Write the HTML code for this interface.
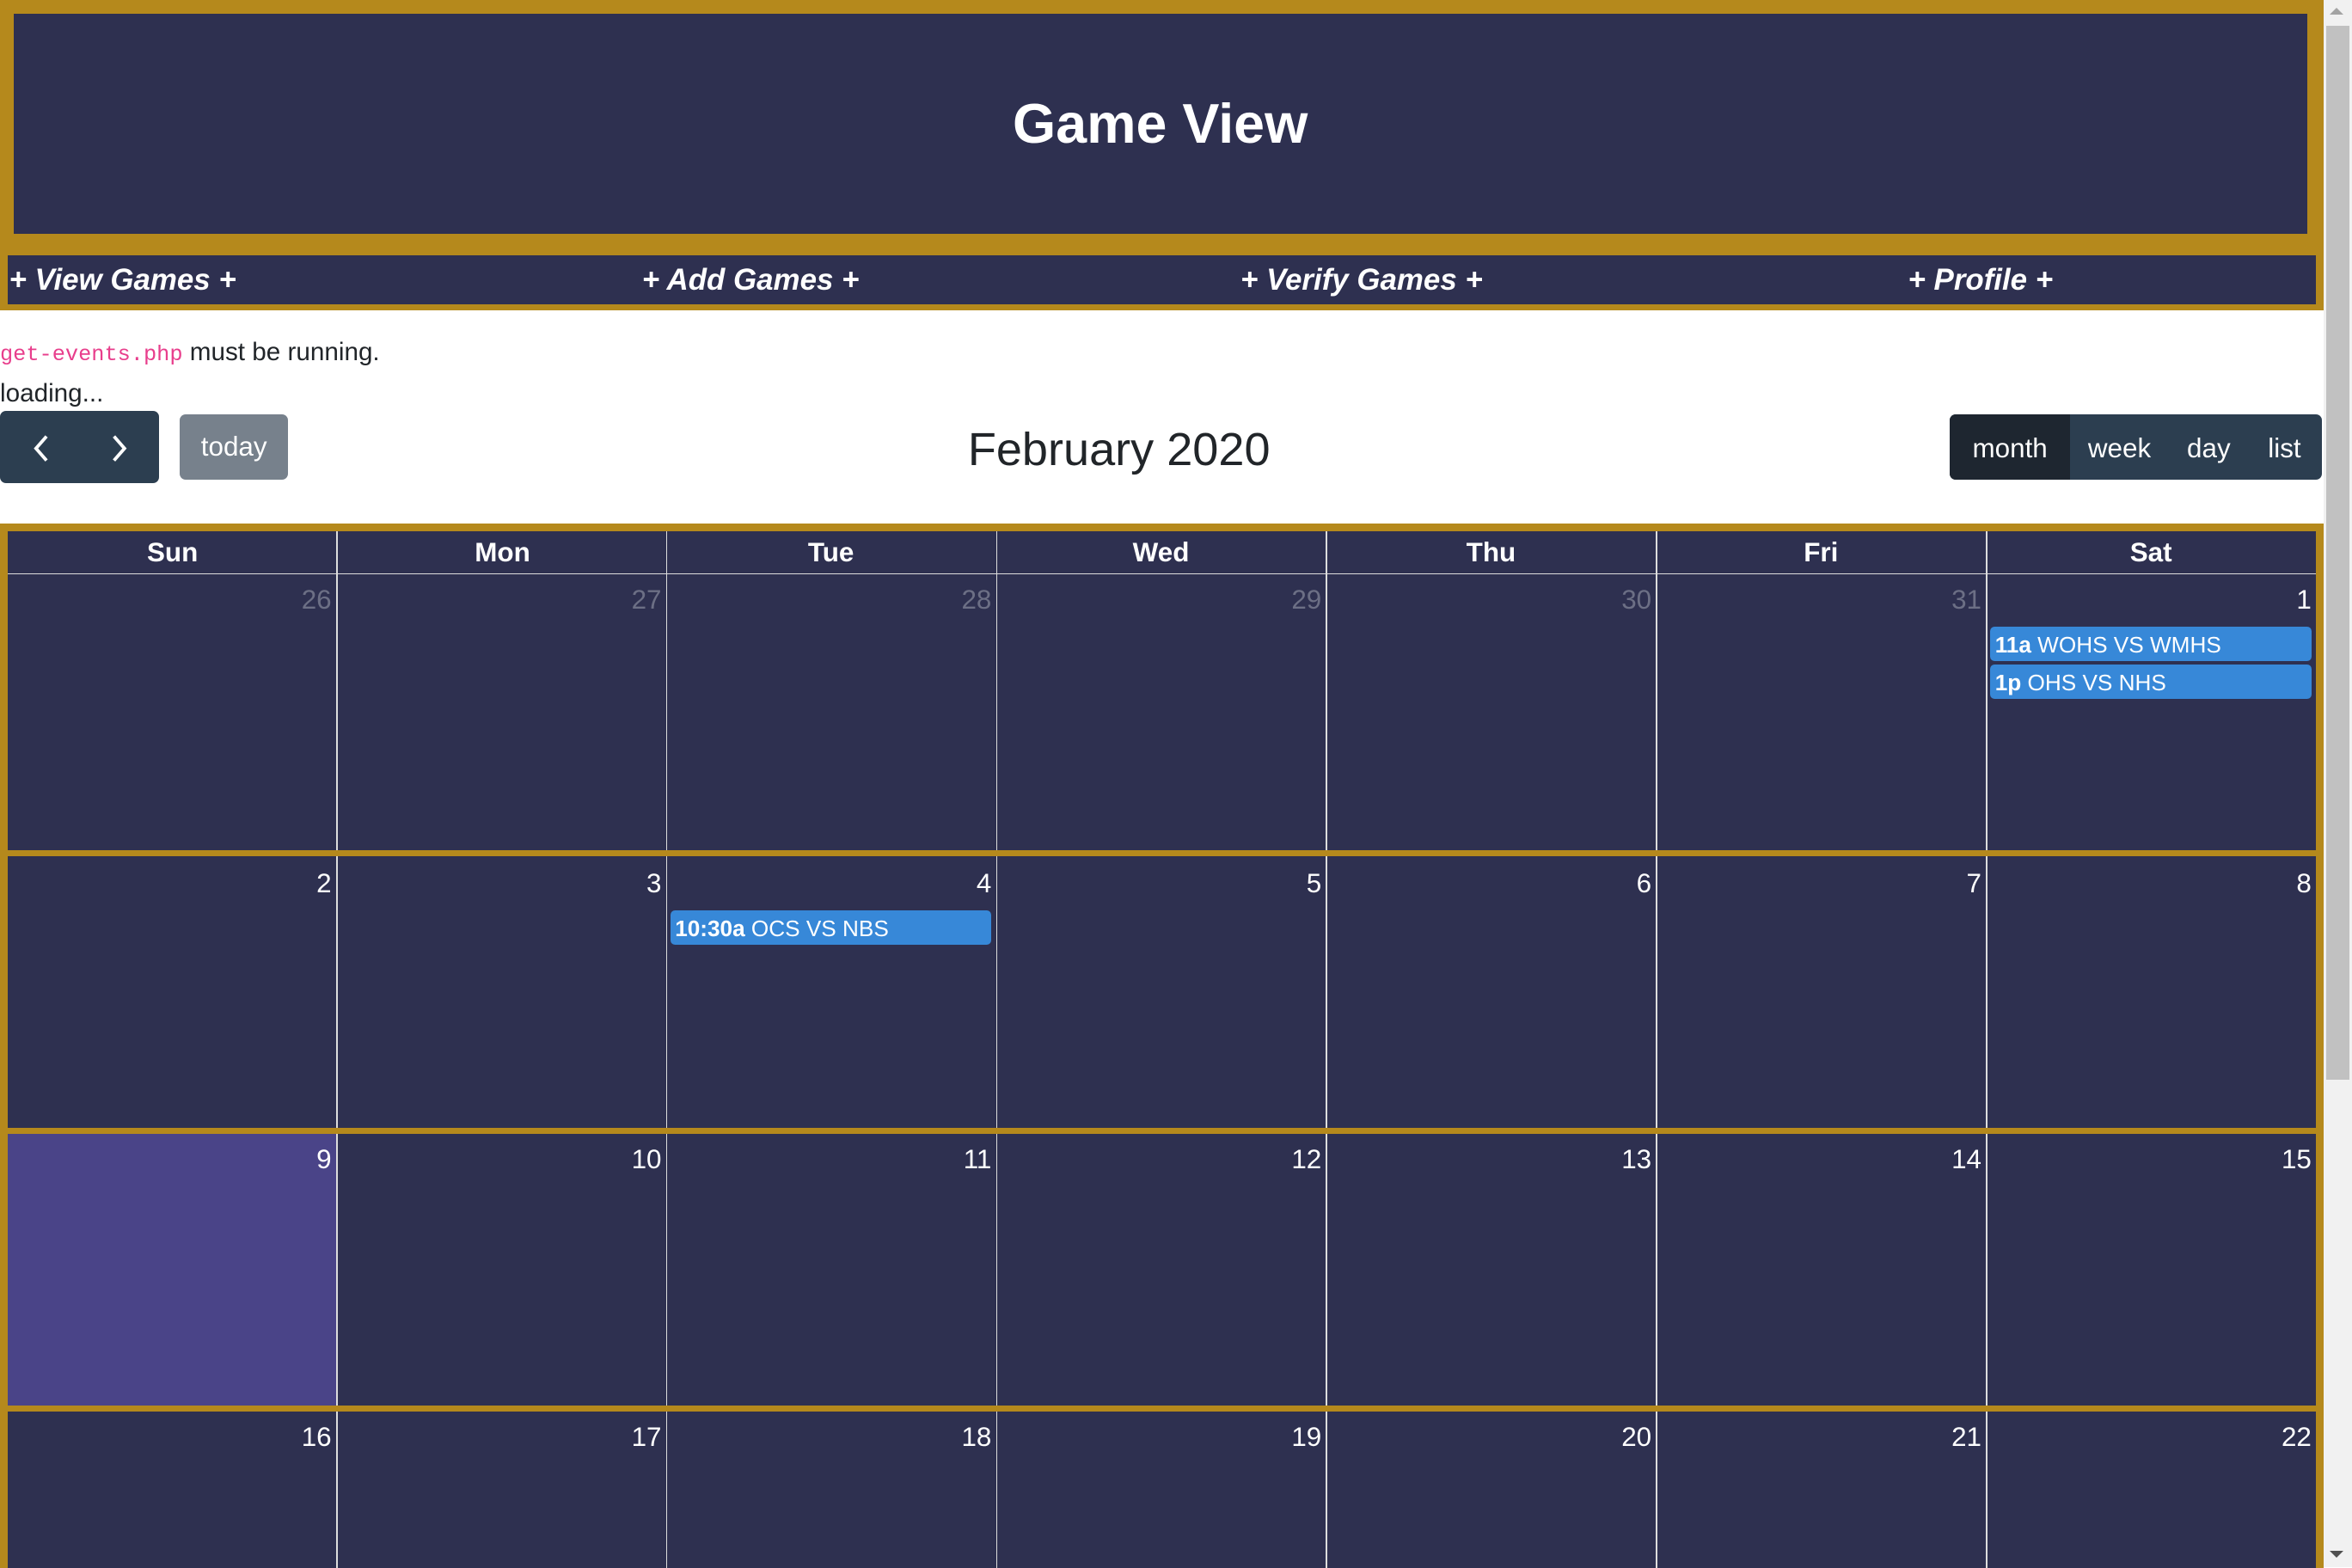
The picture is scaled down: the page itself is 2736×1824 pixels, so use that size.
<!DOCTYPE html>
<html><head><meta charset="utf-8"><style>
*{box-sizing:border-box;margin:0;padding:0}
html,body{width:2736px;height:1824px;overflow:hidden;background:#fff}
#root{zoom:1.7449;width:1568px;height:1045px;position:relative;font-family:"Liberation Sans",sans-serif}
.abs{position:absolute}
.hdr{left:0;top:0;width:1549px;height:207px;background:#b5891c}
.hin{left:9px;top:9px;width:1529px;height:147px;background:#2e3050;color:#fff;font-weight:bold;font-size:37px;text-align:center;line-height:147px}
.nav{left:5px;top:170px;width:1539px;height:33px;background:#2e3050}
.ni{position:absolute;top:0;line-height:33px;color:#fff;font-weight:bold;font-style:italic;font-size:20px;white-space:nowrap}
.txt{font-size:17px;color:#212529;left:0}
code{font-family:"Liberation Mono",monospace;color:#e83e8c;font-size:14.5px}
.btn{background:#2c3e50;color:#fff;border-radius:4px}
.cal{left:0;top:349px;width:1549px;height:700px;background:#b5891c}
.grid{left:5px;top:5px;width:1539px;height:700px;background:#2e3050}
.th{position:absolute;top:1px;height:28px;line-height:28px;text-align:center;color:#fff;font-weight:bold;font-size:18px;width:220px}
.vl{position:absolute;top:0;width:1px;height:700px;background:#ddd}
.sep{position:absolute;left:-5px;width:1549px;height:4px;background:#b5891c}
.dn{position:absolute;color:#fff;font-size:18px;text-align:right;width:210px;margin-top:2px}
.om{color:#6c6f85}
.ev{position:absolute;background:#3788d8;border-radius:3px;color:#fff;font-size:15px;height:23px;line-height:25px;padding-left:3px;white-space:nowrap}
</style></head><body><div id="root">
<div class="abs hdr"></div>
<div class="abs hin">Game View</div>
<div class="abs nav">
<span class="ni" style="left:1px">+ View Games +</span>
<span class="ni" style="left:423px">+ Add Games +</span>
<span class="ni" style="left:822px">+ Verify Games +</span>
<span class="ni" style="left:1267px">+ Profile +</span>
</div>
<div class="abs txt" style="top:225px"><code>get-events.php</code> must be running.</div>
<div class="abs txt" style="top:253px">loading...</div>
<div class="abs btn" style="left:0;top:274px;width:106px;height:48px">
<svg width="106" height="48" style="position:absolute;left:0;top:0"><path d="M31 17 L24 25 L31 33" stroke="#fff" stroke-width="2.2" fill="none"/><path d="M76 17 L83 25 L76 33" stroke="#fff" stroke-width="2.2" fill="none"/></svg>
</div>
<div class="abs" style="left:120px;top:276px;width:72px;height:44px;background:#77818c;border-radius:4px;color:#fff;font-size:18px;line-height:44px;text-align:center">today</div>
<div class="abs" style="left:546px;top:282px;width:400px;text-align:center;font-size:31px;color:#212529">February 2020</div>
<div class="abs btn" style="left:1300px;top:276px;width:248px;height:44px;font-size:18px;line-height:46px">
<span class="abs" style="left:0;top:0;width:80px;height:44px;background:#1e2630;border-radius:4px 0 0 4px;text-align:center">month</span>
<span class="abs" style="left:92px">week</span>
<span class="abs" style="left:158px">day</span>
<span class="abs" style="left:212px">list</span>
</div>
<div class="abs cal"><div class="abs grid">
<div class="abs" style="left:0;top:28px;width:1539px;height:1px;background:#ddd"></div>
<div class="th" style="left:0">Sun</div><div class="th" style="left:220px">Mon</div><div class="th" style="left:439px">Tue</div><div class="th" style="left:659px">Wed</div><div class="th" style="left:879px">Thu</div><div class="th" style="left:1099px">Fri</div><div class="th" style="left:1319px">Sat</div>
<div class="abs" style="left:0;top:402px;width:219px;height:181px;background:#4a4488"></div>
<div class="vl" style="left:219px"></div><div class="vl" style="left:439px"></div><div class="vl" style="left:659px"></div><div class="vl" style="left:879px"></div><div class="vl" style="left:1099px"></div><div class="vl" style="left:1319px"></div>
<div class="sep" style="top:213px"></div><div class="sep" style="top:398px"></div><div class="sep" style="top:583px"></div>
<div class="dn om" style="left:6px;top:34px">26</div><div class="dn om" style="left:226px;top:34px">27</div><div class="dn om" style="left:446px;top:34px">28</div><div class="dn om" style="left:666px;top:34px">29</div><div class="dn om" style="left:886px;top:34px">30</div><div class="dn om" style="left:1106px;top:34px">31</div><div class="dn" style="left:1326px;top:34px">1</div>
<div class="dn" style="left:6px;top:223px">2</div><div class="dn" style="left:226px;top:223px">3</div><div class="dn" style="left:446px;top:223px">4</div><div class="dn" style="left:666px;top:223px">5</div><div class="dn" style="left:886px;top:223px">6</div><div class="dn" style="left:1106px;top:223px">7</div><div class="dn" style="left:1326px;top:223px">8</div>
<div class="dn" style="left:6px;top:407px">9</div><div class="dn" style="left:226px;top:407px">10</div><div class="dn" style="left:446px;top:407px">11</div><div class="dn" style="left:666px;top:407px">12</div><div class="dn" style="left:886px;top:407px">13</div><div class="dn" style="left:1106px;top:407px">14</div><div class="dn" style="left:1326px;top:407px">15</div>
<div class="dn" style="left:6px;top:592px">16</div><div class="dn" style="left:226px;top:592px">17</div><div class="dn" style="left:446px;top:592px">18</div><div class="dn" style="left:666px;top:592px">19</div><div class="dn" style="left:886px;top:592px">20</div><div class="dn" style="left:1106px;top:592px">21</div><div class="dn" style="left:1326px;top:592px">22</div>
<div class="ev" style="left:1322px;top:64px;width:214px"><b>11a</b> WOHS VS WMHS</div>
<div class="ev" style="left:1322px;top:89px;width:214px"><b>1p</b> OHS VS NHS</div>
<div class="ev" style="left:442px;top:253px;width:214px"><b>10:30a</b> OCS VS NBS</div>
</div></div>
<div class="abs" style="left:1549px;top:0;width:19px;height:1045px;background:#f1f1f1"></div>
<div class="abs" style="left:1551px;top:17px;width:15px;height:703px;background:#c1c1c1"></div>
<div class="abs" style="left:1553px;top:5px;width:0;height:0;border-left:5px solid transparent;border-right:5px solid transparent;border-bottom:5px solid #a3a3a3"></div>
<div class="abs" style="left:1553px;top:1034px;width:0;height:0;border-left:5px solid transparent;border-right:5px solid transparent;border-top:5px solid #505050"></div>
</div></body></html>
